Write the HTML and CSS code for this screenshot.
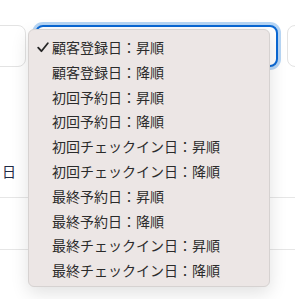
FILE: index.html
```html
<!DOCTYPE html>
<html lang="ja">
<head>
    <meta charset="UTF-8">
    <meta name="viewport" content="width=device-width, initial-scale=1.0">
    <title>並び替え</title>
    <link rel="stylesheet" href="styles.css">
</head>
<body>
    <div class="page">
        <div class="filters">
            <div class="field"></div>
            <div class="field select-field"></div>
            <div class="field"></div>
        </div>

        <div class="table">
            <div class="row first"><span class="cell">日</span></div>
            <div class="row"></div>
            <div class="row"></div>
        </div>

        <!-- open sort menu -->
        <ul class="menu">
            <li class="item checked">
                <svg class="check" width="12" height="11" viewBox="0 0 12 11"><path d="M1.2 5.6 L4.4 9.2 L10.8 1.2" fill="none" stroke="#262626" stroke-width="1.8" stroke-linecap="round" stroke-linejoin="round"/></svg>
                顧客登録日：昇順
            </li>
            <li class="item">顧客登録日：降順</li>
            <li class="item">初回予約日：昇順</li>
            <li class="item">初回予約日：降順</li>
            <li class="item">初回チェックイン日：昇順</li>
            <li class="item">初回チェックイン日：降順</li>
            <li class="item">最終予約日：昇順</li>
            <li class="item">最終予約日：降順</li>
            <li class="item">最終チェックイン日：昇順</li>
            <li class="item">最終チェックイン日：降順</li>
        </ul>
    </div>
</body>
</html>
```

FILE: styles.css
```css
* {
    margin: 0;
    padding: 0;
    box-sizing: border-box;
}

body {
    font-family: "Noto Sans CJK JP", "Noto Sans", sans-serif;
    background: #fff;
    overflow: hidden;
}

.page {
    position: relative;
    width: 295px;
    height: 299px;
    overflow: hidden;
}

.filters {
    display: flex;
    gap: 9px;
    margin-left: -60px;
    padding-top: 25px;
}

.field {
    width: 86px;
    height: 42px;
    border: 1px solid #e3e3e3;
    border-radius: 8px;
    background: #fff;
    flex-shrink: 0;
}

.select-field {
    width: 243px;
    border: 2px solid #0a68d4;
    box-shadow: 0 0 0 3px #b6d5f4;
}

.table {
    margin-top: 78px;
}

.row {
    height: 52px;
    border-top: 1px solid #e6e6e6;
    display: flex;
    align-items: center;
}

.row.first {
    border-top: none;
}

.cell {
    padding-left: 2px;
    font-size: 14px;
    color: #1f2a44;
}

.menu {
    position: absolute;
    left: 28px;
    top: 29px;
    width: 242px;
    height: 258px;
    list-style: none;
    padding-top: 5px;
    background: #ece6e5;
    border: 1px solid #d6d2d1;
    border-radius: 6px;
    box-shadow: 0 6px 18px rgba(0, 0, 0, 0.12);
}

.item {
    position: relative;
    height: 24.8px;
    line-height: 24.8px;
    padding-left: 23px;
    font-size: 14px;
    color: #2b2b2b;
}

.check {
    position: absolute;
    left: 8px;
    top: 7px;
}
```
